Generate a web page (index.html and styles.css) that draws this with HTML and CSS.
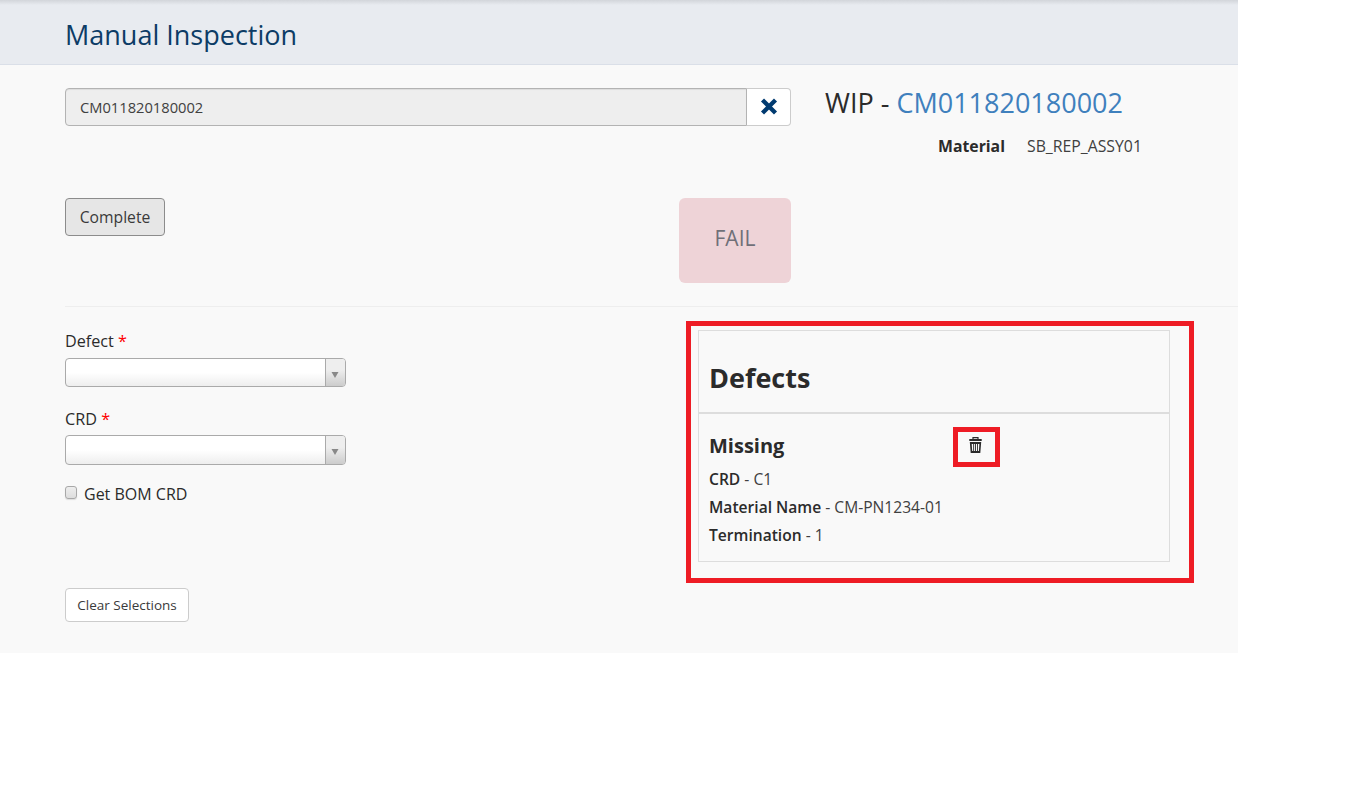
FILE: index.html
```html
<!DOCTYPE html>
<html lang="en">
<head>
<meta charset="utf-8">
<title>Manual Inspection</title>
<link rel="stylesheet" href="styles.css">
</head>
<body>
<div class="page">
  <header class="header"><h1 class="title">Manual Inspection</h1></header>
  <main class="main">
    <section class="top">
      <div class="scan">
        <div class="scan-input"><span>CM011820180002</span></div>
        <button class="scan-clear" aria-label="Clear"><svg width="18" height="18" viewBox="0 0 18 18"><path d="M2.500 2 15.500 15M15.500 2 2.500 15" stroke="#003a70" stroke-width="4.300"/></svg></button>
      </div>
      <div class="wip">
        <h2 class="wip-title"><span>WIP - <a class="link">CM011820180002</a></span></h2>
        <div class="material"><b>Material</b><span>SB_REP_ASSY01</span></div>
      </div>
    </section>
    <section class="actions">
      <button class="complete"><span>Complete</span></button>
      <div class="fail"><span>FAIL</span></div>
    </section>
    <section class="content">
      <div class="form">
        <label class="label"><span>Defect <i class="req">*</i></span></label>
        <div class="select"><span class="arrow"><svg width="8" height="6" viewBox="0 0 8 6"><path d="M.5 0h7L4 6z" fill="#888"/></svg></span></div>
        <label class="label label-crd"><span>CRD <i class="req">*</i></span></label>
        <div class="select select-crd"><span class="arrow"><svg width="8" height="6" viewBox="0 0 8 6"><path d="M.5 0h7L4 6z" fill="#888"/></svg></span></div>
        <label class="check"><span class="box"></span><span>Get BOM CRD</span></label>
        <button class="clear"><span>Clear Selections</span></button>
      </div>
      <div class="defects">
        <h3 class="defects-title"><span>Defects</span></h3>
        <div class="defect">
          <div class="defect-head">
            <h4 class="defect-name"><span>Missing</span></h4>
            <span class="trash"><svg width="13" height="16" viewBox="0 0 13 16"><path d="M4 2.500V.6h5v1.900" fill="none" stroke="#2b2b2b" stroke-width="1.200"/><path d="M.3 2h12.400v1.900H.3zM.8 5h11.400l-.9 11H1.700z" fill="#2b2b2b"/><path d="M2.700 7h1.500v7H3.200zM5.100 7h1v7h-1zM7 7h1v7H7zM8.900 7h1.500l-.5 7h-1z" fill="#f9f9f9"/></svg></span>
          </div>
          <p class="line"><span><b>CRD</b> - C1</span></p>
          <p class="line"><span><b>Material Name</b> - CM-PN1234-01</span></p>
          <p class="line"><span><b>Termination</b> - 1</span></p>
        </div>
      </div>
    </section>
  </main>
  <div class="mark mark-panel"></div>
  <div class="mark mark-trash"></div>
</div>
</body>
</html>
```
FILE: styles.css
```css
* { box-sizing: border-box; }
body { margin: 0; background: #fff; color: #2b2b2b; font-family: "Open Sans", sans-serif; font-size: 15.800px; font-weight: 400; }
h1, h2, h3, h4, p { margin: 0; }
button { font: inherit; color: #3a3a3a; padding: 0; }
span, a, b { white-space: nowrap; }
svg { display: block; }
.page { position: relative; width: 1238px; height: 653px; background: #f9f9f9; }
.header { height: 65px; padding: 15px 65px 0; border-bottom: 1px solid #dadfe8; background: linear-gradient(#d2d5da 0, #e8ebf0 5px); }
.title { font-size: 27px; line-height: 40px; font-weight: 400; color: #0c3c66; }
.main { padding: 23px 0 0 65px; }
.top { display: flex; height: 110px; gap: 34px; }
.scan { display: flex; width: 726px; height: 38px; }
.scan-input { width: 682px; padding-left: 14px; line-height: 36px; font-size: 14.700px; color: #404040; background: #eee; border: 1px solid #b3b3b3; border-radius: 4px 0 0 4px; box-shadow: inset 0 1px 1px rgba(0,0,0,.075); }
.scan-clear { display: grid; place-items: center; width: 44px; background: #fff; border: 1px solid #ccc; border-left: 0; border-radius: 0 4px 4px 0; }
.wip-title { font-size: 27px; line-height: 30px; font-weight: 400; }
.link { color: #3f80bd; }
.material { display: flex; gap: 22px; padding: 17px 0 0 113px; line-height: 22px; }
.material b { font-weight: 700; }
.material span { color: #404040; }
.actions { display: flex; justify-content: space-between; width: 726px; height: 108px; }
.complete { width: 100px; height: 38px; border: 1px solid #8c8c8c; border-radius: 4px; background: #e6e6e6; font-size: 15.700px; }
.fail { width: 112px; height: 85px; border-radius: 6px; background: #eed3d7; color: #707078; font-size: 21px; line-height: 81px; text-align: center; }
.content { display: flex; height: 347px; border-top: 1px solid #eee; }
.form { width: 633px; padding-top: 24px; }
.label { display: block; height: 27px; line-height: 20px; font-size: 16.200px; }
.req { color: #f00; font-style: normal; }
.select { display: flex; justify-content: flex-end; width: 281px; height: 29px; border: 1px solid #aaa; border-radius: 4px; overflow: hidden; background: linear-gradient(#fff 50%, #eee); }
.arrow { display: grid; place-items: center; width: 20px; padding: 4px 1px 0 0; border-left: 1px solid #aaa; background: linear-gradient(#eee 40%, #ccc); }
.label-crd { margin-top: 22px; height: 26px; }
.select-crd { height: 30px; }
.check { display: flex; gap: 7px; margin-top: 19px; height: 20px; line-height: 20px; font-size: 16px; }
.box { width: 12px; height: 13px; margin-top: 2px; border: 1px solid #a8a8a8; border-radius: 3px; background: linear-gradient(#eee, #ddd); box-shadow: 0 1px 1px #ddd; }
.clear { display: block; width: 124px; height: 34px; margin-top: 84px; padding-bottom: 1px; border: 1px solid #ccc; border-radius: 4px; background: #fff; font-size: 13.500px; }
.defects { width: 472px; height: 232px; margin-top: 23px; border: 1px solid #ddd; }
.defects-title { height: 83px; padding: 28px 10px 0; border-bottom: 2px solid #ddd; font-size: 27px; line-height: 38px; font-weight: 700; }
.defect { padding: 17px 10px 0; }
.defect-head { display: flex; justify-content: space-between; width: 273px; height: 34px; }
.defect-name { font-size: 20px; line-height: 30px; font-weight: 700; }
.trash { padding-top: 6px; }
.line { height: 28px; line-height: 28px; font-size: 15.600px; color: #404040; }
.line b { font-size: 15.600px; font-weight: 600; color: #2b2b2b; }
.mark { position: absolute; border: 5px solid #ee1c25; pointer-events: none; }
.mark-panel { left: 686px; top: 321px; width: 508px; height: 262px; }
.mark-trash { left: 953px; top: 427px; width: 47px; height: 40px; }
```
